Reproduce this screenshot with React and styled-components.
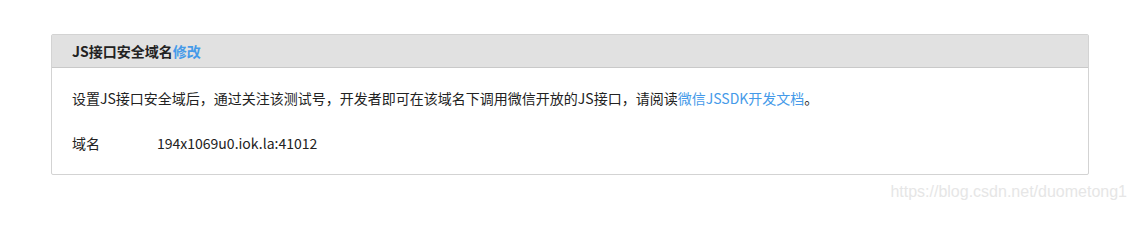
import React from 'react';
import styled, { createGlobalStyle } from 'styled-components';

const GlobalStyle = createGlobalStyle`
  html, body {
    margin: 0;
    background: #fff;
    overflow: hidden;
    font-family: "Noto Sans CJK SC", "Liberation Sans", sans-serif;
  }
`;

const Page = styled.div`
  position: relative;
  height: 207px;
  padding: 34px 46px 0 51px;
  box-sizing: border-box;
  overflow: hidden;
`;

const Panel = styled.div`
  width: 1038px;
  box-sizing: border-box;
  border: 1px solid #d3d3d3;
  border-radius: 2px;
`;

const PanelHeader = styled.div`
  height: 32px;
  background: #e1e1e1;
  border-bottom: 1px solid #c9c9c9;
  display: flex;
  align-items: center;
  padding-left: 20px;
  font-size: 14px;
  font-weight: bold;
  color: #222;
`;

const Link = styled.a`
  color: #459ae9;
  text-decoration: none;
  font-weight: ${(p) => (p.bold ? 'bold' : 'normal')};
`;

const PanelBody = styled.div`
  padding: 20px 20px 21px 20px;
  font-size: 14px;
  color: #222;
  line-height: 20px;
`;

const Row = styled.div`
  display: flex;
  margin-top: ${(p) => p.gap || 0}px;
`;

const Label = styled.span`
  width: 85px;
  flex-shrink: 0;
`;

const Watermark = styled.span`
  position: absolute;
  right: 8px;
  top: 183px;
  font-size: 16px;
  color: #e6e6e6;
  font-family: "Liberation Sans", Arial, sans-serif;
`;

export default function App() {
  return (
    <Page>
      <GlobalStyle />
      <Panel>
        <PanelHeader>
          JS接口安全域名<Link bold href="#">修改</Link>
        </PanelHeader>
        <PanelBody>
          <Row>
            <span>
              设置JS接口安全域后，通过关注该测试号，开发者即可在该域名下调用微信开放的JS接口，请阅读
              <Link href="#">微信JSSDK开发文档</Link>。
            </span>
          </Row>
          <Row gap={25}>
            <Label>域名</Label>
            <span>194x1069u0.iok.la:41012</span>
          </Row>
        </PanelBody>
      </Panel>
      <Watermark>https://blog.csdn.net/duometong1</Watermark>
    </Page>
  );
}
